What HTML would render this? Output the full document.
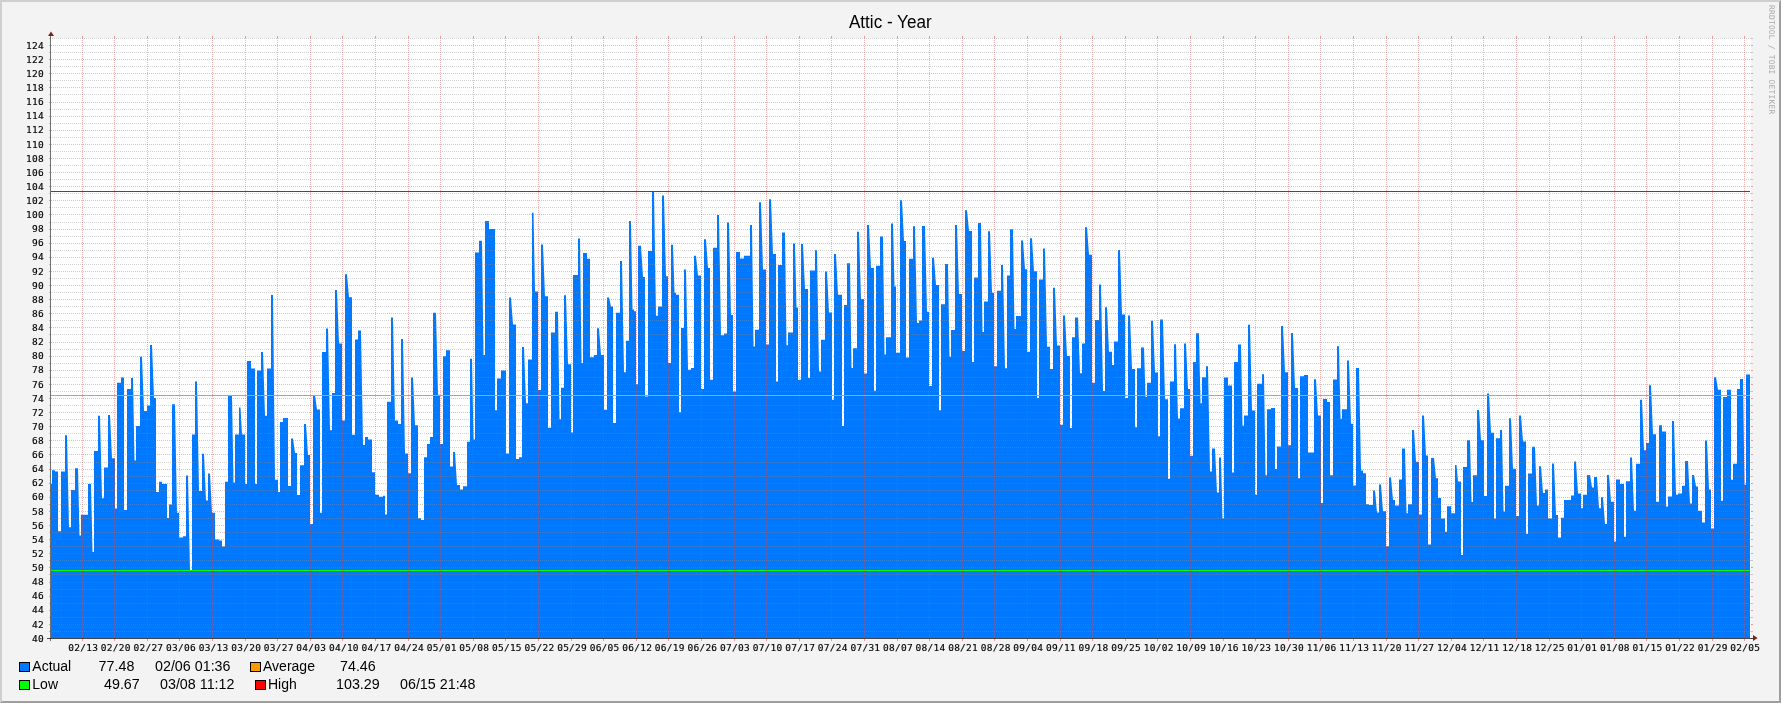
<!DOCTYPE html>
<html lang="en"><head><meta charset="utf-8"><title>Attic - Year</title>
<style>
html,body{margin:0;padding:0;background:#f3f3f3;}
body{width:1781px;height:703px;overflow:hidden;position:relative;font-family:"Liberation Sans",sans-serif;}
svg{position:absolute;left:0;top:0;display:block}
.ax{font-family:"DejaVu Sans Mono","Liberation Mono",monospace;font-size:9.5px;fill:#000;letter-spacing:0.25px;stroke:#000;stroke-width:0.15px}
.lg{font-family:"Liberation Sans",sans-serif;font-size:14.8px;fill:#000;white-space:pre}
.tt{font-family:"Liberation Sans",sans-serif;font-size:17.9px;fill:#000;white-space:pre}
.wm{font-family:"DejaVu Sans Mono","Liberation Mono",monospace;font-size:7.9px;fill:#a9a9a9;letter-spacing:0.22px}
</style></head><body>
<svg style="will-change:transform" width="1781" height="703" viewBox="0 0 1781 703">

<rect x="0" y="0" width="1781" height="703" fill="#f3f3f3"/>
<polygon points="0,0 1781,0 1779,2 2,2 2,701 0,703" fill="#cfcfcf"/>
<polygon points="1781,703 0,703 2,701 1779,701 1779,2 1781,0" fill="#9e9e9e"/>
<rect x="51" y="38" width="1700" height="600" fill="#ffffff"/>
<polygon points="51,638 51.0,483.9 52.0,483.9 52.0,470.3 55.0,470.3 55.0,471.5 58.0,471.5 58.0,531.3 61.0,531.3 61.0,471.5 65.0,471.5 65.0,435.2 67.0,435.2 69.0,527.2 71.0,527.2 71.0,490.1 75.0,490.1 75.0,468.2 78.0,468.2 79.5,535.4 81.0,535.4 81.0,514.8 88.0,514.8 88.0,483.9 91.0,483.9 92.5,551.9 94.0,551.9 94.0,450.9 98.0,450.9 98.0,415.8 100.0,415.8 102.0,498.3 104.0,498.3 104.0,467.4 108.0,467.4 108.0,415.0 110.0,415.0 112.0,458.3 115.0,458.3 115.0,508.6 117.0,508.6 117.0,382.8 121.0,382.8 121.0,377.5 124.0,377.5 124.0,509.9 127.0,509.9 127.0,389.0 131.0,389.0 131.0,377.9 133.0,377.9 134.5,460.4 136.0,460.4 136.0,426.1 140.0,426.1 140.0,356.8 142.0,356.8 144.0,410.9 147.0,410.9 147.0,405.5 150.0,405.5 150.0,344.9 152.0,344.9 154.0,398.1 156.0,398.1 156.0,492.1 159.0,492.1 159.0,481.8 162.0,481.8 162.0,483.9 167.0,483.9 167.0,518.1 169.0,518.1 169.0,504.5 172.0,504.5 172.0,404.3 175.0,404.3 177.0,512.8 179.0,512.8 179.0,537.5 183.0,537.5 183.0,536.3 186.0,536.3 186.0,475.6 188.0,475.6 190.0,570.5 192.0,570.5 192.0,434.4 195.0,434.4 195.0,381.6 197.0,381.6 199.0,490.9 202.0,490.9 202.0,453.8 204.0,453.8 206.0,500.4 208.0,500.4 208.0,473.6 210.0,473.6 212.0,512.8 215.0,512.8 215.0,539.6 219.0,539.6 219.0,540.4 222.0,540.4 222.0,546.6 225.0,546.6 225.0,481.8 228.0,481.8 228.0,396.0 232.0,396.0 233.5,482.6 235.0,482.6 235.0,434.4 239.0,434.4 239.0,407.6 240.5,407.6 242.0,434.4 245.0,434.4 245.0,483.9 247.0,483.9 247.0,361.0 251.0,361.0 251.0,368.4 255.0,368.4 255.0,483.9 257.0,483.9 257.0,370.4 261.0,370.4 261.0,351.9 263.0,351.9 265.0,415.8 267.0,415.8 267.0,368.4 271.0,368.4 271.0,295.0 273.0,295.0 275.0,479.8 278.0,479.8 278.0,492.1 280.0,492.1 280.0,422.0 283.0,422.0 283.0,417.9 288.0,417.9 288.0,485.9 291.0,485.9 291.0,438.5 293.0,438.5 295.0,452.9 297.0,452.9 297.0,495.0 300.0,495.0 300.0,465.3 304.0,465.3 304.0,424.1 306.0,424.1 308.0,455.0 310.0,455.0 310.0,523.9 313.0,523.9 313.0,395.2 315.0,395.2 317.0,409.6 320.0,409.6 320.0,512.8 322.0,512.8 322.0,351.9 326.0,351.9 326.0,328.4 328.0,328.4 330.0,430.3 332.0,430.3 332.0,393.1 335.0,393.1 335.0,290.0 337.0,290.0 339.0,343.6 342.0,343.6 342.0,420.6 345.0,420.6 345.0,274.2 347.0,274.2 349.0,297.2 352.0,297.2 352.0,434.7 355.0,434.7 355.0,339.4 358.0,339.4 358.0,330.5 361.0,330.5 363.0,445.0 365.0,445.0 365.0,437.1 368.0,437.1 368.0,439.4 372.0,439.4 372.0,472.3 375.0,472.3 375.0,494.8 379.0,494.8 379.0,496.7 383.0,496.7 383.0,495.7 385.0,495.7 385.0,514.5 387.0,514.5 387.0,401.8 391.0,401.8 391.0,317.4 393.0,317.4 395.0,420.6 398.0,420.6 398.0,423.9 401.0,423.9 401.0,338.9 403.0,338.9 405.0,453.5 408.0,453.5 408.0,473.2 411.0,473.2 411.0,377.4 413.0,377.4 415.0,425.3 418.0,425.3 418.0,518.3 421.0,518.3 421.0,520.1 424.0,520.1 424.0,457.2 427.0,457.2 427.0,444.1 430.0,444.1 430.0,437.1 433.0,437.1 433.0,312.7 436.0,312.7 438.0,394.8 440.0,394.8 440.0,444.1 443.0,444.1 443.0,356.3 446.0,356.3 446.0,350.2 450.0,350.2 450.0,466.6 453.0,466.6 453.0,452.1 455.0,452.1 457.0,484.9 460.0,484.9 460.0,489.6 463.0,489.6 463.0,486.3 467.0,486.3 467.0,441.7 470.0,441.7 470.0,358.7 472.0,358.7 473.5,439.4 475.0,439.4 475.0,252.6 479.0,252.6 479.0,240.8 482.0,240.8 483.5,354.9 485.0,354.9 485.0,221.1 489.0,221.1 489.0,229.1 495.0,229.1 495.0,410.3 497.0,410.3 497.0,378.4 501.0,378.4 501.0,370.4 506.0,370.4 506.0,453.5 509.0,453.5 509.0,297.6 511.0,297.6 513.0,324.4 516.0,324.4 516.0,459.1 519.0,459.1 519.0,457.2 522.0,457.2 522.0,346.9 524.0,346.9 526.0,403.3 528.0,403.3 528.0,359.6 532.0,359.6 532.0,212.7 533.5,212.7 535.0,291.5 538.0,291.5 538.0,390.1 541.0,390.1 541.0,244.6 543.0,244.6 545.0,296.2 548.0,296.2 548.0,427.7 551.0,427.7 551.0,332.4 555.0,332.4 555.0,311.7 558.0,311.7 559.5,419.2 561.0,419.2 561.0,387.8 564.0,387.8 564.0,295.3 566.0,295.3 568.0,364.3 571.0,364.3 571.0,432.4 573.0,432.4 573.0,275.1 578.0,275.1 578.0,238.5 580.0,238.5 581.5,362.9 583.0,362.9 583.0,253.0 587.0,253.0 587.0,258.7 590.0,258.7 590.0,357.3 594.0,357.3 594.0,354.9 597.0,354.9 597.0,328.2 599.0,328.2 601.0,354.9 604.0,354.9 604.0,409.8 607.0,409.8 607.0,297.6 609.0,297.6 611.0,306.6 613.0,306.6 613.0,423.0 616.0,423.0 616.0,312.7 620.0,312.7 620.0,261.0 622.0,261.0 624.0,372.3 626.0,372.3 626.0,340.8 629.0,340.8 629.0,221.1 631.0,221.1 632.5,309.4 634.0,309.4 634.0,311.3 636.0,311.3 636.0,384.2 638.0,384.2 638.0,245.8 641.0,245.8 643.0,276.9 645.0,276.9 645.0,396.4 648.0,396.4 648.0,251.0 652.0,251.0 652.0,191.8 654.0,191.8 656.0,315.7 658.0,315.7 658.0,306.5 662.0,306.5 662.0,195.5 664.0,195.5 666.0,276.2 668.0,276.2 668.0,363.1 671.0,363.1 671.0,244.7 673.0,244.7 674.5,292.8 676.0,292.8 676.0,294.7 679.0,294.7 679.0,412.3 681.0,412.3 681.0,327.9 684.0,327.9 684.0,269.5 686.0,269.5 688.0,369.7 691.0,369.7 691.0,367.9 694.0,367.9 694.0,255.8 696.0,255.8 698.0,275.4 701.0,275.4 701.0,389.0 704.0,389.0 704.0,239.2 706.0,239.2 708.0,268.0 710.0,268.0 710.0,379.7 713.0,379.7 713.0,247.7 717.0,247.7 717.0,215.1 719.0,215.1 721.0,335.3 724.0,335.3 724.0,333.5 727.0,333.5 727.0,222.5 729.0,222.5 731.0,315.0 733.0,315.0 733.0,391.6 736.0,391.6 736.0,252.1 740.0,252.1 740.0,258.4 744.0,258.4 744.0,255.8 750.0,255.8 750.0,225.1 752.0,225.1 753.5,346.4 755.0,346.4 755.0,329.8 759.0,329.8 759.0,202.2 761.0,202.2 763.0,269.5 766.0,269.5 766.0,344.6 769.0,344.6 769.0,199.2 771.0,199.2 773.0,254.0 776.0,254.0 776.0,381.6 778.0,381.6 778.0,265.1 782.0,265.1 782.0,232.5 785.0,232.5 786.5,345.3 788.0,345.3 788.0,332.4 793.0,332.4 793.0,243.6 795.0,243.6 796.5,307.6 798.0,307.6 798.0,379.7 801.0,379.7 801.0,244.0 803.0,244.0 805.0,289.1 808.0,289.1 808.0,377.9 810.0,377.9 810.0,270.6 815.0,270.6 815.0,250.3 817.0,250.3 819.0,371.6 821.0,371.6 821.0,339.8 825.0,339.8 825.0,271.4 827.0,271.4 829.0,312.4 832.0,312.4 832.0,399.7 834.0,399.7 834.0,254.0 836.0,254.0 838.0,294.7 842.0,294.7 842.0,425.9 844.0,425.9 844.0,305.0 847.0,305.0 847.0,263.2 850.0,263.2 851.5,367.9 853.0,367.9 853.0,348.3 857.0,348.3 857.0,231.8 859.0,231.8 861.0,299.1 864.0,299.1 864.0,373.4 867.0,373.4 867.0,225.1 869.0,225.1 871.0,268.0 874.0,268.0 874.0,390.8 876.0,390.8 876.0,265.8 880.0,265.8 880.0,236.6 883.0,236.6 884.5,354.6 886.0,354.6 886.0,337.2 891.0,337.2 891.0,223.6 893.0,223.6 894.5,286.5 896.0,286.5 896.0,352.7 900.0,352.7 900.0,200.3 902.0,200.3 904.0,241.0 906.0,241.0 906.0,357.5 909.0,357.5 909.0,258.8 913.0,258.8 913.0,226.2 915.0,226.2 917.0,323.1 919.0,323.1 919.0,320.5 922.0,320.5 922.0,225.9 925.0,225.9 927.0,311.7 929.0,311.7 929.0,386.0 932.0,386.0 932.0,257.7 934.0,257.7 936.0,284.9 939.0,284.9 939.0,410.3 941.0,410.3 941.0,304.3 945.0,304.3 945.0,263.9 948.0,263.9 949.5,356.7 951.0,356.7 951.0,329.9 955.0,329.9 955.0,225.1 957.0,225.1 959.0,294.0 962.0,294.0 962.0,350.9 965.0,350.9 965.0,210.3 967.0,210.3 969.0,230.9 972.0,230.9 972.0,362.1 974.0,362.1 974.0,277.5 978.0,277.5 978.0,223.1 981.0,223.1 982.5,332.0 984.0,332.0 984.0,301.4 988.0,301.4 988.0,231.3 990.0,231.3 992.0,292.8 994.0,292.8 994.0,366.2 997.0,366.2 997.0,290.7 1001.0,290.7 1001.0,265.1 1003.0,265.1 1005.0,368.3 1007.0,368.3 1007.0,275.4 1010.0,275.4 1010.0,229.2 1013.0,229.2 1014.5,329.1 1016.0,329.1 1016.0,315.9 1021.0,315.9 1021.0,240.4 1023.0,240.4 1025.0,269.3 1027.0,269.3 1027.0,351.8 1030.0,351.8 1030.0,238.3 1032.0,238.3 1034.0,271.3 1037.0,271.3 1037.0,398.0 1039.0,398.0 1039.0,279.6 1043.0,279.6 1043.0,248.6 1045.0,248.6 1047.0,346.8 1050.0,346.8 1050.0,369.1 1053.0,369.1 1053.0,287.8 1055.0,287.8 1057.0,345.6 1060.0,345.6 1060.0,424.8 1063.0,424.8 1063.0,315.5 1065.0,315.5 1067.0,355.9 1070.0,355.9 1070.0,428.1 1072.0,428.1 1072.0,337.3 1075.0,337.3 1075.0,317.5 1078.0,317.5 1080.0,373.2 1082.0,373.2 1082.0,343.5 1085.0,343.5 1085.0,227.2 1087.0,227.2 1089.0,254.8 1092.0,254.8 1092.0,382.7 1095.0,382.7 1095.0,320.0 1099.0,320.0 1099.0,284.5 1101.0,284.5 1103.0,390.9 1105.0,390.9 1105.0,307.2 1107.0,307.2 1109.0,351.8 1112.0,351.8 1112.0,365.0 1114.0,365.0 1114.0,341.4 1118.0,341.4 1118.0,249.9 1120.0,249.9 1122.0,314.6 1125.0,314.6 1125.0,398.0 1128.0,398.0 1128.0,315.5 1130.0,315.5 1132.0,369.1 1135.0,369.1 1135.0,427.2 1137.0,427.2 1137.0,368.3 1141.0,368.3 1141.0,347.6 1144.0,347.6 1145.5,397.1 1147.0,397.1 1147.0,382.7 1151.0,382.7 1151.0,320.8 1153.0,320.8 1155.0,372.4 1158.0,372.4 1158.0,436.3 1160.0,436.3 1160.0,319.6 1163.0,319.6 1165.0,399.2 1168.0,399.2 1168.0,478.8 1170.0,478.8 1170.0,381.5 1174.0,381.5 1174.0,344.3 1176.0,344.3 1178.0,418.6 1180.0,418.6 1180.0,408.3 1184.0,408.3 1184.0,343.5 1186.0,343.5 1188.0,388.9 1190.0,388.9 1190.0,455.7 1193.0,455.7 1193.0,362.1 1196.0,362.1 1196.0,333.2 1199.0,333.2 1200.5,403.3 1202.0,403.3 1202.0,377.3 1206.0,377.3 1206.0,366.2 1208.0,366.2 1210.0,471.4 1212.0,471.4 1212.0,448.5 1215.0,448.5 1217.0,492.6 1219.0,492.6 1219.0,457.6 1221.0,457.6 1222.5,518.6 1224.0,518.6 1224.0,377.6 1228.0,377.6 1228.0,385.4 1232.0,385.4 1232.0,472.4 1234.0,472.4 1234.0,361.9 1238.0,361.9 1238.0,344.6 1241.0,344.6 1242.5,425.8 1244.0,425.8 1244.0,415.5 1248.0,415.5 1248.0,324.8 1250.0,324.8 1252.0,410.6 1255.0,410.6 1255.0,494.7 1257.0,494.7 1257.0,383.7 1262.0,383.7 1262.0,374.3 1264.0,374.3 1265.5,475.3 1267.0,475.3 1267.0,409.3 1271.0,409.3 1271.0,408.1 1275.0,408.1 1275.0,469.1 1277.0,469.1 1277.0,446.4 1281.0,446.4 1281.0,326.0 1283.0,326.0 1285.0,372.2 1288.0,372.2 1288.0,445.2 1291.0,445.2 1291.0,333.0 1293.0,333.0 1295.0,387.9 1298.0,387.9 1298.0,478.2 1300.0,478.2 1300.0,376.3 1304.0,376.3 1304.0,375.1 1308.0,375.1 1308.0,452.6 1311.0,452.6 1311.0,452.6 1314.0,452.6 1314.0,379.2 1316.0,379.2 1318.0,415.5 1321.0,415.5 1321.0,503.0 1323.0,503.0 1323.0,399.0 1327.0,399.0 1327.0,401.9 1330.0,401.9 1330.0,475.3 1333.0,475.3 1333.0,379.6 1337.0,379.6 1337.0,346.2 1339.0,346.2 1340.5,418.8 1342.0,418.8 1342.0,409.3 1347.0,409.3 1347.0,360.6 1349.0,360.6 1351.0,423.8 1353.0,423.8 1353.0,485.6 1356.0,485.6 1356.0,368.1 1359.0,368.1 1361.0,470.4 1363.0,470.4 1363.0,473.3 1366.0,473.3 1366.0,504.2 1369.0,504.2 1369.0,505.0 1373.0,505.0 1373.0,490.6 1375.0,490.6 1377.0,512.4 1379.0,512.4 1379.0,484.4 1381.0,484.4 1383.0,511.2 1386.0,511.2 1386.0,546.3 1389.0,546.3 1389.0,477.4 1391.0,477.4 1393.0,500.1 1395.0,500.1 1395.0,505.4 1399.0,505.4 1399.0,479.4 1402.0,479.4 1402.0,448.5 1405.0,448.5 1406.5,513.3 1408.0,513.3 1408.0,504.2 1412.0,504.2 1412.0,429.9 1414.0,429.9 1416.0,461.7 1419.0,461.7 1419.0,514.5 1422.0,514.5 1422.0,415.5 1424.0,415.5 1426.0,455.5 1428.0,455.5 1428.0,544.6 1431.0,544.6 1431.0,458.0 1434.0,458.0 1436.0,478.2 1438.0,478.2 1438.0,498.0 1441.0,498.0 1441.0,518.6 1445.0,518.6 1445.0,531.8 1447.0,531.8 1447.0,506.3 1451.0,506.3 1451.0,513.3 1455.0,513.3 1455.0,465.0 1456.5,465.0 1458.0,481.5 1461.0,481.5 1461.0,554.9 1463.0,554.9 1463.0,467.1 1467.0,467.1 1467.0,440.3 1470.0,440.3 1471.5,502.1 1473.0,502.1 1473.0,475.3 1477.0,475.3 1477.0,410.1 1479.0,410.1 1481.0,440.3 1484.0,440.3 1484.0,495.9 1487.0,495.9 1487.0,393.6 1489.0,393.6 1491.0,432.8 1494.0,432.8 1494.0,518.6 1496.0,518.6 1496.0,438.2 1500.0,438.2 1500.0,429.9 1502.0,429.9 1503.5,511.4 1505.0,511.4 1505.0,485.8 1509.0,485.8 1509.0,418.2 1511.0,418.2 1513.0,468.7 1516.0,468.7 1516.0,516.0 1519.0,516.0 1519.0,415.4 1521.0,415.4 1523.0,441.4 1526.0,441.4 1526.0,533.8 1528.0,533.8 1528.0,473.4 1532.0,473.4 1532.0,446.7 1535.0,446.7 1537.0,505.4 1539.0,505.4 1539.0,466.2 1541.0,466.2 1543.0,492.9 1545.0,492.9 1545.0,489.4 1548.0,489.4 1548.0,518.5 1552.0,518.5 1552.0,463.4 1554.0,463.4 1556.0,515.0 1558.0,515.0 1558.0,537.4 1561.0,537.4 1561.0,517.8 1564.0,517.8 1564.0,500.0 1568.0,500.0 1568.0,500.0 1571.0,500.0 1571.0,495.4 1574.0,495.4 1574.0,461.6 1576.0,461.6 1578.0,493.6 1581.0,493.6 1581.0,508.2 1583.0,508.2 1583.0,494.7 1587.0,494.7 1587.0,475.1 1590.0,475.1 1592.0,487.6 1594.0,487.6 1594.0,476.9 1597.0,476.9 1599.0,508.2 1601.0,508.2 1601.0,497.2 1603.0,497.2 1605.0,523.9 1607.0,523.9 1607.0,475.1 1609.0,475.1 1611.0,501.8 1614.0,501.8 1614.0,541.6 1616.0,541.6 1616.0,479.4 1620.0,479.4 1620.0,484.0 1624.0,484.0 1624.0,536.7 1626.0,536.7 1626.0,481.2 1630.0,481.2 1630.0,457.4 1632.0,457.4 1634.0,510.7 1636.0,510.7 1636.0,463.8 1640.0,463.8 1640.0,399.7 1642.0,399.7 1644.0,450.2 1646.0,450.2 1646.0,443.1 1649.0,443.1 1649.0,385.2 1651.0,385.2 1653.0,434.2 1656.0,434.2 1656.0,501.8 1659.0,501.8 1659.0,425.3 1662.0,425.3 1662.0,431.4 1666.0,431.4 1666.0,506.4 1668.0,506.4 1668.0,496.5 1672.0,496.5 1672.0,421.1 1674.0,421.1 1676.0,494.7 1678.0,494.7 1678.0,493.6 1682.0,493.6 1682.0,485.8 1685.0,485.8 1685.0,460.9 1688.0,460.9 1690.0,503.6 1692.0,503.6 1692.0,475.1 1694.0,475.1 1696.0,486.5 1698.0,486.5 1698.0,510.7 1702.0,510.7 1702.0,522.4 1705.0,522.4 1705.0,440.6 1707.0,440.6 1709.0,489.4 1711.0,489.4 1711.0,528.5 1714.0,528.5 1714.0,377.3 1716.0,377.3 1718.0,389.8 1721.0,389.8 1721.0,500.7 1723.0,500.7 1723.0,396.9 1727.0,396.9 1727.0,389.8 1731.0,389.8 1731.0,479.8 1733.0,479.8 1733.0,463.8 1737.0,463.8 1737.0,389.1 1740.0,389.1 1740.0,379.1 1743.0,379.1 1744.5,484.7 1746.0,484.7 1746.0,374.5 1750.0,374.5 1750,638" fill="#0078ff" shape-rendering="geometricPrecision"/>
<rect x="51" y="395" width="1699" height="1" fill="#ff9900"/>
<rect x="51" y="570" width="1699" height="1" fill="#00ff00"/>
<rect x="51" y="191" width="1699" height="1" fill="#ff0000"/>
<line x1="51" y1="638.5" x2="1751" y2="638.5" stroke="#de5050" stroke-opacity="0.41" stroke-width="1" stroke-dasharray="1 1"/>
<line x1="49" y1="638.5" x2="50" y2="638.5" stroke="#de5050" stroke-opacity="0.55" stroke-width="1"/>
<line x1="1751" y1="638.5" x2="1753" y2="638.5" stroke="#de5050" stroke-opacity="0.55" stroke-width="1"/>
<line x1="50" y1="631.5" x2="1751" y2="631.5" stroke="#8f8f8f" stroke-opacity="0.39" stroke-width="1" stroke-dasharray="1 1"/>
<line x1="49" y1="631.5" x2="50" y2="631.5" stroke="#8f8f8f" stroke-opacity="0.45" stroke-width="1"/>
<line x1="1751" y1="631.5" x2="1753" y2="631.5" stroke="#8f8f8f" stroke-opacity="0.45" stroke-width="1"/>
<line x1="51" y1="624.5" x2="1751" y2="624.5" stroke="#de5050" stroke-opacity="0.41" stroke-width="1" stroke-dasharray="1 1"/>
<line x1="49" y1="624.5" x2="50" y2="624.5" stroke="#de5050" stroke-opacity="0.55" stroke-width="1"/>
<line x1="1751" y1="624.5" x2="1753" y2="624.5" stroke="#de5050" stroke-opacity="0.55" stroke-width="1"/>
<line x1="50" y1="617.5" x2="1751" y2="617.5" stroke="#8f8f8f" stroke-opacity="0.39" stroke-width="1" stroke-dasharray="1 1"/>
<line x1="49" y1="617.5" x2="50" y2="617.5" stroke="#8f8f8f" stroke-opacity="0.45" stroke-width="1"/>
<line x1="1751" y1="617.5" x2="1753" y2="617.5" stroke="#8f8f8f" stroke-opacity="0.45" stroke-width="1"/>
<line x1="51" y1="610.5" x2="1751" y2="610.5" stroke="#de5050" stroke-opacity="0.41" stroke-width="1" stroke-dasharray="1 1"/>
<line x1="49" y1="610.5" x2="50" y2="610.5" stroke="#de5050" stroke-opacity="0.55" stroke-width="1"/>
<line x1="1751" y1="610.5" x2="1753" y2="610.5" stroke="#de5050" stroke-opacity="0.55" stroke-width="1"/>
<line x1="50" y1="603.5" x2="1751" y2="603.5" stroke="#8f8f8f" stroke-opacity="0.39" stroke-width="1" stroke-dasharray="1 1"/>
<line x1="49" y1="603.5" x2="50" y2="603.5" stroke="#8f8f8f" stroke-opacity="0.45" stroke-width="1"/>
<line x1="1751" y1="603.5" x2="1753" y2="603.5" stroke="#8f8f8f" stroke-opacity="0.45" stroke-width="1"/>
<line x1="51" y1="596.5" x2="1751" y2="596.5" stroke="#de5050" stroke-opacity="0.41" stroke-width="1" stroke-dasharray="1 1"/>
<line x1="49" y1="596.5" x2="50" y2="596.5" stroke="#de5050" stroke-opacity="0.55" stroke-width="1"/>
<line x1="1751" y1="596.5" x2="1753" y2="596.5" stroke="#de5050" stroke-opacity="0.55" stroke-width="1"/>
<line x1="50" y1="589.5" x2="1751" y2="589.5" stroke="#8f8f8f" stroke-opacity="0.39" stroke-width="1" stroke-dasharray="1 1"/>
<line x1="49" y1="589.5" x2="50" y2="589.5" stroke="#8f8f8f" stroke-opacity="0.45" stroke-width="1"/>
<line x1="1751" y1="589.5" x2="1753" y2="589.5" stroke="#8f8f8f" stroke-opacity="0.45" stroke-width="1"/>
<line x1="51" y1="582.5" x2="1751" y2="582.5" stroke="#de5050" stroke-opacity="0.41" stroke-width="1" stroke-dasharray="1 1"/>
<line x1="49" y1="582.5" x2="50" y2="582.5" stroke="#de5050" stroke-opacity="0.55" stroke-width="1"/>
<line x1="1751" y1="582.5" x2="1753" y2="582.5" stroke="#de5050" stroke-opacity="0.55" stroke-width="1"/>
<line x1="50" y1="574.5" x2="1751" y2="574.5" stroke="#8f8f8f" stroke-opacity="0.39" stroke-width="1" stroke-dasharray="1 1"/>
<line x1="49" y1="574.5" x2="50" y2="574.5" stroke="#8f8f8f" stroke-opacity="0.45" stroke-width="1"/>
<line x1="1751" y1="574.5" x2="1753" y2="574.5" stroke="#8f8f8f" stroke-opacity="0.45" stroke-width="1"/>
<line x1="51" y1="567.5" x2="1751" y2="567.5" stroke="#de5050" stroke-opacity="0.41" stroke-width="1" stroke-dasharray="1 1"/>
<line x1="49" y1="567.5" x2="50" y2="567.5" stroke="#de5050" stroke-opacity="0.55" stroke-width="1"/>
<line x1="1751" y1="567.5" x2="1753" y2="567.5" stroke="#de5050" stroke-opacity="0.55" stroke-width="1"/>
<line x1="50" y1="560.5" x2="1751" y2="560.5" stroke="#8f8f8f" stroke-opacity="0.39" stroke-width="1" stroke-dasharray="1 1"/>
<line x1="49" y1="560.5" x2="50" y2="560.5" stroke="#8f8f8f" stroke-opacity="0.45" stroke-width="1"/>
<line x1="1751" y1="560.5" x2="1753" y2="560.5" stroke="#8f8f8f" stroke-opacity="0.45" stroke-width="1"/>
<line x1="51" y1="553.5" x2="1751" y2="553.5" stroke="#de5050" stroke-opacity="0.41" stroke-width="1" stroke-dasharray="1 1"/>
<line x1="49" y1="553.5" x2="50" y2="553.5" stroke="#de5050" stroke-opacity="0.55" stroke-width="1"/>
<line x1="1751" y1="553.5" x2="1753" y2="553.5" stroke="#de5050" stroke-opacity="0.55" stroke-width="1"/>
<line x1="50" y1="546.5" x2="1751" y2="546.5" stroke="#8f8f8f" stroke-opacity="0.39" stroke-width="1" stroke-dasharray="1 1"/>
<line x1="49" y1="546.5" x2="50" y2="546.5" stroke="#8f8f8f" stroke-opacity="0.45" stroke-width="1"/>
<line x1="1751" y1="546.5" x2="1753" y2="546.5" stroke="#8f8f8f" stroke-opacity="0.45" stroke-width="1"/>
<line x1="51" y1="539.5" x2="1751" y2="539.5" stroke="#de5050" stroke-opacity="0.41" stroke-width="1" stroke-dasharray="1 1"/>
<line x1="49" y1="539.5" x2="50" y2="539.5" stroke="#de5050" stroke-opacity="0.55" stroke-width="1"/>
<line x1="1751" y1="539.5" x2="1753" y2="539.5" stroke="#de5050" stroke-opacity="0.55" stroke-width="1"/>
<line x1="50" y1="532.5" x2="1751" y2="532.5" stroke="#8f8f8f" stroke-opacity="0.39" stroke-width="1" stroke-dasharray="1 1"/>
<line x1="49" y1="532.5" x2="50" y2="532.5" stroke="#8f8f8f" stroke-opacity="0.45" stroke-width="1"/>
<line x1="1751" y1="532.5" x2="1753" y2="532.5" stroke="#8f8f8f" stroke-opacity="0.45" stroke-width="1"/>
<line x1="51" y1="525.5" x2="1751" y2="525.5" stroke="#de5050" stroke-opacity="0.41" stroke-width="1" stroke-dasharray="1 1"/>
<line x1="49" y1="525.5" x2="50" y2="525.5" stroke="#de5050" stroke-opacity="0.55" stroke-width="1"/>
<line x1="1751" y1="525.5" x2="1753" y2="525.5" stroke="#de5050" stroke-opacity="0.55" stroke-width="1"/>
<line x1="50" y1="518.5" x2="1751" y2="518.5" stroke="#8f8f8f" stroke-opacity="0.39" stroke-width="1" stroke-dasharray="1 1"/>
<line x1="49" y1="518.5" x2="50" y2="518.5" stroke="#8f8f8f" stroke-opacity="0.45" stroke-width="1"/>
<line x1="1751" y1="518.5" x2="1753" y2="518.5" stroke="#8f8f8f" stroke-opacity="0.45" stroke-width="1"/>
<line x1="51" y1="511.5" x2="1751" y2="511.5" stroke="#de5050" stroke-opacity="0.41" stroke-width="1" stroke-dasharray="1 1"/>
<line x1="49" y1="511.5" x2="50" y2="511.5" stroke="#de5050" stroke-opacity="0.55" stroke-width="1"/>
<line x1="1751" y1="511.5" x2="1753" y2="511.5" stroke="#de5050" stroke-opacity="0.55" stroke-width="1"/>
<line x1="50" y1="504.5" x2="1751" y2="504.5" stroke="#8f8f8f" stroke-opacity="0.39" stroke-width="1" stroke-dasharray="1 1"/>
<line x1="49" y1="504.5" x2="50" y2="504.5" stroke="#8f8f8f" stroke-opacity="0.45" stroke-width="1"/>
<line x1="1751" y1="504.5" x2="1753" y2="504.5" stroke="#8f8f8f" stroke-opacity="0.45" stroke-width="1"/>
<line x1="51" y1="497.5" x2="1751" y2="497.5" stroke="#de5050" stroke-opacity="0.41" stroke-width="1" stroke-dasharray="1 1"/>
<line x1="49" y1="497.5" x2="50" y2="497.5" stroke="#de5050" stroke-opacity="0.55" stroke-width="1"/>
<line x1="1751" y1="497.5" x2="1753" y2="497.5" stroke="#de5050" stroke-opacity="0.55" stroke-width="1"/>
<line x1="50" y1="490.5" x2="1751" y2="490.5" stroke="#8f8f8f" stroke-opacity="0.39" stroke-width="1" stroke-dasharray="1 1"/>
<line x1="49" y1="490.5" x2="50" y2="490.5" stroke="#8f8f8f" stroke-opacity="0.45" stroke-width="1"/>
<line x1="1751" y1="490.5" x2="1753" y2="490.5" stroke="#8f8f8f" stroke-opacity="0.45" stroke-width="1"/>
<line x1="51" y1="483.5" x2="1751" y2="483.5" stroke="#de5050" stroke-opacity="0.41" stroke-width="1" stroke-dasharray="1 1"/>
<line x1="49" y1="483.5" x2="50" y2="483.5" stroke="#de5050" stroke-opacity="0.55" stroke-width="1"/>
<line x1="1751" y1="483.5" x2="1753" y2="483.5" stroke="#de5050" stroke-opacity="0.55" stroke-width="1"/>
<line x1="50" y1="476.5" x2="1751" y2="476.5" stroke="#8f8f8f" stroke-opacity="0.39" stroke-width="1" stroke-dasharray="1 1"/>
<line x1="49" y1="476.5" x2="50" y2="476.5" stroke="#8f8f8f" stroke-opacity="0.45" stroke-width="1"/>
<line x1="1751" y1="476.5" x2="1753" y2="476.5" stroke="#8f8f8f" stroke-opacity="0.45" stroke-width="1"/>
<line x1="51" y1="469.5" x2="1751" y2="469.5" stroke="#de5050" stroke-opacity="0.41" stroke-width="1" stroke-dasharray="1 1"/>
<line x1="49" y1="469.5" x2="50" y2="469.5" stroke="#de5050" stroke-opacity="0.55" stroke-width="1"/>
<line x1="1751" y1="469.5" x2="1753" y2="469.5" stroke="#de5050" stroke-opacity="0.55" stroke-width="1"/>
<line x1="50" y1="462.5" x2="1751" y2="462.5" stroke="#8f8f8f" stroke-opacity="0.39" stroke-width="1" stroke-dasharray="1 1"/>
<line x1="49" y1="462.5" x2="50" y2="462.5" stroke="#8f8f8f" stroke-opacity="0.45" stroke-width="1"/>
<line x1="1751" y1="462.5" x2="1753" y2="462.5" stroke="#8f8f8f" stroke-opacity="0.45" stroke-width="1"/>
<line x1="51" y1="454.5" x2="1751" y2="454.5" stroke="#de5050" stroke-opacity="0.41" stroke-width="1" stroke-dasharray="1 1"/>
<line x1="49" y1="454.5" x2="50" y2="454.5" stroke="#de5050" stroke-opacity="0.55" stroke-width="1"/>
<line x1="1751" y1="454.5" x2="1753" y2="454.5" stroke="#de5050" stroke-opacity="0.55" stroke-width="1"/>
<line x1="50" y1="447.5" x2="1751" y2="447.5" stroke="#8f8f8f" stroke-opacity="0.39" stroke-width="1" stroke-dasharray="1 1"/>
<line x1="49" y1="447.5" x2="50" y2="447.5" stroke="#8f8f8f" stroke-opacity="0.45" stroke-width="1"/>
<line x1="1751" y1="447.5" x2="1753" y2="447.5" stroke="#8f8f8f" stroke-opacity="0.45" stroke-width="1"/>
<line x1="51" y1="440.5" x2="1751" y2="440.5" stroke="#de5050" stroke-opacity="0.41" stroke-width="1" stroke-dasharray="1 1"/>
<line x1="49" y1="440.5" x2="50" y2="440.5" stroke="#de5050" stroke-opacity="0.55" stroke-width="1"/>
<line x1="1751" y1="440.5" x2="1753" y2="440.5" stroke="#de5050" stroke-opacity="0.55" stroke-width="1"/>
<line x1="50" y1="433.5" x2="1751" y2="433.5" stroke="#8f8f8f" stroke-opacity="0.39" stroke-width="1" stroke-dasharray="1 1"/>
<line x1="49" y1="433.5" x2="50" y2="433.5" stroke="#8f8f8f" stroke-opacity="0.45" stroke-width="1"/>
<line x1="1751" y1="433.5" x2="1753" y2="433.5" stroke="#8f8f8f" stroke-opacity="0.45" stroke-width="1"/>
<line x1="51" y1="426.5" x2="1751" y2="426.5" stroke="#de5050" stroke-opacity="0.41" stroke-width="1" stroke-dasharray="1 1"/>
<line x1="49" y1="426.5" x2="50" y2="426.5" stroke="#de5050" stroke-opacity="0.55" stroke-width="1"/>
<line x1="1751" y1="426.5" x2="1753" y2="426.5" stroke="#de5050" stroke-opacity="0.55" stroke-width="1"/>
<line x1="50" y1="419.5" x2="1751" y2="419.5" stroke="#8f8f8f" stroke-opacity="0.39" stroke-width="1" stroke-dasharray="1 1"/>
<line x1="49" y1="419.5" x2="50" y2="419.5" stroke="#8f8f8f" stroke-opacity="0.45" stroke-width="1"/>
<line x1="1751" y1="419.5" x2="1753" y2="419.5" stroke="#8f8f8f" stroke-opacity="0.45" stroke-width="1"/>
<line x1="51" y1="412.5" x2="1751" y2="412.5" stroke="#de5050" stroke-opacity="0.41" stroke-width="1" stroke-dasharray="1 1"/>
<line x1="49" y1="412.5" x2="50" y2="412.5" stroke="#de5050" stroke-opacity="0.55" stroke-width="1"/>
<line x1="1751" y1="412.5" x2="1753" y2="412.5" stroke="#de5050" stroke-opacity="0.55" stroke-width="1"/>
<line x1="50" y1="405.5" x2="1751" y2="405.5" stroke="#8f8f8f" stroke-opacity="0.39" stroke-width="1" stroke-dasharray="1 1"/>
<line x1="49" y1="405.5" x2="50" y2="405.5" stroke="#8f8f8f" stroke-opacity="0.45" stroke-width="1"/>
<line x1="1751" y1="405.5" x2="1753" y2="405.5" stroke="#8f8f8f" stroke-opacity="0.45" stroke-width="1"/>
<line x1="51" y1="398.5" x2="1751" y2="398.5" stroke="#de5050" stroke-opacity="0.41" stroke-width="1" stroke-dasharray="1 1"/>
<line x1="49" y1="398.5" x2="50" y2="398.5" stroke="#de5050" stroke-opacity="0.55" stroke-width="1"/>
<line x1="1751" y1="398.5" x2="1753" y2="398.5" stroke="#de5050" stroke-opacity="0.55" stroke-width="1"/>
<line x1="50" y1="391.5" x2="1751" y2="391.5" stroke="#8f8f8f" stroke-opacity="0.39" stroke-width="1" stroke-dasharray="1 1"/>
<line x1="49" y1="391.5" x2="50" y2="391.5" stroke="#8f8f8f" stroke-opacity="0.45" stroke-width="1"/>
<line x1="1751" y1="391.5" x2="1753" y2="391.5" stroke="#8f8f8f" stroke-opacity="0.45" stroke-width="1"/>
<line x1="51" y1="384.5" x2="1751" y2="384.5" stroke="#de5050" stroke-opacity="0.41" stroke-width="1" stroke-dasharray="1 1"/>
<line x1="49" y1="384.5" x2="50" y2="384.5" stroke="#de5050" stroke-opacity="0.55" stroke-width="1"/>
<line x1="1751" y1="384.5" x2="1753" y2="384.5" stroke="#de5050" stroke-opacity="0.55" stroke-width="1"/>
<line x1="50" y1="377.5" x2="1751" y2="377.5" stroke="#8f8f8f" stroke-opacity="0.39" stroke-width="1" stroke-dasharray="1 1"/>
<line x1="49" y1="377.5" x2="50" y2="377.5" stroke="#8f8f8f" stroke-opacity="0.45" stroke-width="1"/>
<line x1="1751" y1="377.5" x2="1753" y2="377.5" stroke="#8f8f8f" stroke-opacity="0.45" stroke-width="1"/>
<line x1="51" y1="370.5" x2="1751" y2="370.5" stroke="#de5050" stroke-opacity="0.41" stroke-width="1" stroke-dasharray="1 1"/>
<line x1="49" y1="370.5" x2="50" y2="370.5" stroke="#de5050" stroke-opacity="0.55" stroke-width="1"/>
<line x1="1751" y1="370.5" x2="1753" y2="370.5" stroke="#de5050" stroke-opacity="0.55" stroke-width="1"/>
<line x1="50" y1="363.5" x2="1751" y2="363.5" stroke="#8f8f8f" stroke-opacity="0.39" stroke-width="1" stroke-dasharray="1 1"/>
<line x1="49" y1="363.5" x2="50" y2="363.5" stroke="#8f8f8f" stroke-opacity="0.45" stroke-width="1"/>
<line x1="1751" y1="363.5" x2="1753" y2="363.5" stroke="#8f8f8f" stroke-opacity="0.45" stroke-width="1"/>
<line x1="51" y1="356.5" x2="1751" y2="356.5" stroke="#de5050" stroke-opacity="0.41" stroke-width="1" stroke-dasharray="1 1"/>
<line x1="49" y1="356.5" x2="50" y2="356.5" stroke="#de5050" stroke-opacity="0.55" stroke-width="1"/>
<line x1="1751" y1="356.5" x2="1753" y2="356.5" stroke="#de5050" stroke-opacity="0.55" stroke-width="1"/>
<line x1="50" y1="349.5" x2="1751" y2="349.5" stroke="#8f8f8f" stroke-opacity="0.39" stroke-width="1" stroke-dasharray="1 1"/>
<line x1="49" y1="349.5" x2="50" y2="349.5" stroke="#8f8f8f" stroke-opacity="0.45" stroke-width="1"/>
<line x1="1751" y1="349.5" x2="1753" y2="349.5" stroke="#8f8f8f" stroke-opacity="0.45" stroke-width="1"/>
<line x1="51" y1="342.5" x2="1751" y2="342.5" stroke="#de5050" stroke-opacity="0.41" stroke-width="1" stroke-dasharray="1 1"/>
<line x1="49" y1="342.5" x2="50" y2="342.5" stroke="#de5050" stroke-opacity="0.55" stroke-width="1"/>
<line x1="1751" y1="342.5" x2="1753" y2="342.5" stroke="#de5050" stroke-opacity="0.55" stroke-width="1"/>
<line x1="50" y1="334.5" x2="1751" y2="334.5" stroke="#8f8f8f" stroke-opacity="0.39" stroke-width="1" stroke-dasharray="1 1"/>
<line x1="49" y1="334.5" x2="50" y2="334.5" stroke="#8f8f8f" stroke-opacity="0.45" stroke-width="1"/>
<line x1="1751" y1="334.5" x2="1753" y2="334.5" stroke="#8f8f8f" stroke-opacity="0.45" stroke-width="1"/>
<line x1="51" y1="327.5" x2="1751" y2="327.5" stroke="#de5050" stroke-opacity="0.41" stroke-width="1" stroke-dasharray="1 1"/>
<line x1="49" y1="327.5" x2="50" y2="327.5" stroke="#de5050" stroke-opacity="0.55" stroke-width="1"/>
<line x1="1751" y1="327.5" x2="1753" y2="327.5" stroke="#de5050" stroke-opacity="0.55" stroke-width="1"/>
<line x1="50" y1="320.5" x2="1751" y2="320.5" stroke="#8f8f8f" stroke-opacity="0.39" stroke-width="1" stroke-dasharray="1 1"/>
<line x1="49" y1="320.5" x2="50" y2="320.5" stroke="#8f8f8f" stroke-opacity="0.45" stroke-width="1"/>
<line x1="1751" y1="320.5" x2="1753" y2="320.5" stroke="#8f8f8f" stroke-opacity="0.45" stroke-width="1"/>
<line x1="51" y1="313.5" x2="1751" y2="313.5" stroke="#de5050" stroke-opacity="0.41" stroke-width="1" stroke-dasharray="1 1"/>
<line x1="49" y1="313.5" x2="50" y2="313.5" stroke="#de5050" stroke-opacity="0.55" stroke-width="1"/>
<line x1="1751" y1="313.5" x2="1753" y2="313.5" stroke="#de5050" stroke-opacity="0.55" stroke-width="1"/>
<line x1="50" y1="306.5" x2="1751" y2="306.5" stroke="#8f8f8f" stroke-opacity="0.39" stroke-width="1" stroke-dasharray="1 1"/>
<line x1="49" y1="306.5" x2="50" y2="306.5" stroke="#8f8f8f" stroke-opacity="0.45" stroke-width="1"/>
<line x1="1751" y1="306.5" x2="1753" y2="306.5" stroke="#8f8f8f" stroke-opacity="0.45" stroke-width="1"/>
<line x1="51" y1="299.5" x2="1751" y2="299.5" stroke="#de5050" stroke-opacity="0.41" stroke-width="1" stroke-dasharray="1 1"/>
<line x1="49" y1="299.5" x2="50" y2="299.5" stroke="#de5050" stroke-opacity="0.55" stroke-width="1"/>
<line x1="1751" y1="299.5" x2="1753" y2="299.5" stroke="#de5050" stroke-opacity="0.55" stroke-width="1"/>
<line x1="50" y1="292.5" x2="1751" y2="292.5" stroke="#8f8f8f" stroke-opacity="0.39" stroke-width="1" stroke-dasharray="1 1"/>
<line x1="49" y1="292.5" x2="50" y2="292.5" stroke="#8f8f8f" stroke-opacity="0.45" stroke-width="1"/>
<line x1="1751" y1="292.5" x2="1753" y2="292.5" stroke="#8f8f8f" stroke-opacity="0.45" stroke-width="1"/>
<line x1="51" y1="285.5" x2="1751" y2="285.5" stroke="#de5050" stroke-opacity="0.41" stroke-width="1" stroke-dasharray="1 1"/>
<line x1="49" y1="285.5" x2="50" y2="285.5" stroke="#de5050" stroke-opacity="0.55" stroke-width="1"/>
<line x1="1751" y1="285.5" x2="1753" y2="285.5" stroke="#de5050" stroke-opacity="0.55" stroke-width="1"/>
<line x1="50" y1="278.5" x2="1751" y2="278.5" stroke="#8f8f8f" stroke-opacity="0.39" stroke-width="1" stroke-dasharray="1 1"/>
<line x1="49" y1="278.5" x2="50" y2="278.5" stroke="#8f8f8f" stroke-opacity="0.45" stroke-width="1"/>
<line x1="1751" y1="278.5" x2="1753" y2="278.5" stroke="#8f8f8f" stroke-opacity="0.45" stroke-width="1"/>
<line x1="51" y1="271.5" x2="1751" y2="271.5" stroke="#de5050" stroke-opacity="0.41" stroke-width="1" stroke-dasharray="1 1"/>
<line x1="49" y1="271.5" x2="50" y2="271.5" stroke="#de5050" stroke-opacity="0.55" stroke-width="1"/>
<line x1="1751" y1="271.5" x2="1753" y2="271.5" stroke="#de5050" stroke-opacity="0.55" stroke-width="1"/>
<line x1="50" y1="264.5" x2="1751" y2="264.5" stroke="#8f8f8f" stroke-opacity="0.39" stroke-width="1" stroke-dasharray="1 1"/>
<line x1="49" y1="264.5" x2="50" y2="264.5" stroke="#8f8f8f" stroke-opacity="0.45" stroke-width="1"/>
<line x1="1751" y1="264.5" x2="1753" y2="264.5" stroke="#8f8f8f" stroke-opacity="0.45" stroke-width="1"/>
<line x1="51" y1="257.5" x2="1751" y2="257.5" stroke="#de5050" stroke-opacity="0.41" stroke-width="1" stroke-dasharray="1 1"/>
<line x1="49" y1="257.5" x2="50" y2="257.5" stroke="#de5050" stroke-opacity="0.55" stroke-width="1"/>
<line x1="1751" y1="257.5" x2="1753" y2="257.5" stroke="#de5050" stroke-opacity="0.55" stroke-width="1"/>
<line x1="50" y1="250.5" x2="1751" y2="250.5" stroke="#8f8f8f" stroke-opacity="0.39" stroke-width="1" stroke-dasharray="1 1"/>
<line x1="49" y1="250.5" x2="50" y2="250.5" stroke="#8f8f8f" stroke-opacity="0.45" stroke-width="1"/>
<line x1="1751" y1="250.5" x2="1753" y2="250.5" stroke="#8f8f8f" stroke-opacity="0.45" stroke-width="1"/>
<line x1="51" y1="243.5" x2="1751" y2="243.5" stroke="#de5050" stroke-opacity="0.41" stroke-width="1" stroke-dasharray="1 1"/>
<line x1="49" y1="243.5" x2="50" y2="243.5" stroke="#de5050" stroke-opacity="0.55" stroke-width="1"/>
<line x1="1751" y1="243.5" x2="1753" y2="243.5" stroke="#de5050" stroke-opacity="0.55" stroke-width="1"/>
<line x1="50" y1="236.5" x2="1751" y2="236.5" stroke="#8f8f8f" stroke-opacity="0.39" stroke-width="1" stroke-dasharray="1 1"/>
<line x1="49" y1="236.5" x2="50" y2="236.5" stroke="#8f8f8f" stroke-opacity="0.45" stroke-width="1"/>
<line x1="1751" y1="236.5" x2="1753" y2="236.5" stroke="#8f8f8f" stroke-opacity="0.45" stroke-width="1"/>
<line x1="51" y1="229.5" x2="1751" y2="229.5" stroke="#de5050" stroke-opacity="0.41" stroke-width="1" stroke-dasharray="1 1"/>
<line x1="49" y1="229.5" x2="50" y2="229.5" stroke="#de5050" stroke-opacity="0.55" stroke-width="1"/>
<line x1="1751" y1="229.5" x2="1753" y2="229.5" stroke="#de5050" stroke-opacity="0.55" stroke-width="1"/>
<line x1="50" y1="222.5" x2="1751" y2="222.5" stroke="#8f8f8f" stroke-opacity="0.39" stroke-width="1" stroke-dasharray="1 1"/>
<line x1="49" y1="222.5" x2="50" y2="222.5" stroke="#8f8f8f" stroke-opacity="0.45" stroke-width="1"/>
<line x1="1751" y1="222.5" x2="1753" y2="222.5" stroke="#8f8f8f" stroke-opacity="0.45" stroke-width="1"/>
<line x1="51" y1="214.5" x2="1751" y2="214.5" stroke="#de5050" stroke-opacity="0.41" stroke-width="1" stroke-dasharray="1 1"/>
<line x1="49" y1="214.5" x2="50" y2="214.5" stroke="#de5050" stroke-opacity="0.55" stroke-width="1"/>
<line x1="1751" y1="214.5" x2="1753" y2="214.5" stroke="#de5050" stroke-opacity="0.55" stroke-width="1"/>
<line x1="50" y1="207.5" x2="1751" y2="207.5" stroke="#8f8f8f" stroke-opacity="0.39" stroke-width="1" stroke-dasharray="1 1"/>
<line x1="49" y1="207.5" x2="50" y2="207.5" stroke="#8f8f8f" stroke-opacity="0.45" stroke-width="1"/>
<line x1="1751" y1="207.5" x2="1753" y2="207.5" stroke="#8f8f8f" stroke-opacity="0.45" stroke-width="1"/>
<line x1="51" y1="200.5" x2="1751" y2="200.5" stroke="#de5050" stroke-opacity="0.41" stroke-width="1" stroke-dasharray="1 1"/>
<line x1="49" y1="200.5" x2="50" y2="200.5" stroke="#de5050" stroke-opacity="0.55" stroke-width="1"/>
<line x1="1751" y1="200.5" x2="1753" y2="200.5" stroke="#de5050" stroke-opacity="0.55" stroke-width="1"/>
<line x1="50" y1="193.5" x2="1751" y2="193.5" stroke="#8f8f8f" stroke-opacity="0.39" stroke-width="1" stroke-dasharray="1 1"/>
<line x1="49" y1="193.5" x2="50" y2="193.5" stroke="#8f8f8f" stroke-opacity="0.45" stroke-width="1"/>
<line x1="1751" y1="193.5" x2="1753" y2="193.5" stroke="#8f8f8f" stroke-opacity="0.45" stroke-width="1"/>
<line x1="51" y1="186.5" x2="1751" y2="186.5" stroke="#de5050" stroke-opacity="0.41" stroke-width="1" stroke-dasharray="1 1"/>
<line x1="49" y1="186.5" x2="50" y2="186.5" stroke="#de5050" stroke-opacity="0.55" stroke-width="1"/>
<line x1="1751" y1="186.5" x2="1753" y2="186.5" stroke="#de5050" stroke-opacity="0.55" stroke-width="1"/>
<line x1="50" y1="179.5" x2="1751" y2="179.5" stroke="#8f8f8f" stroke-opacity="0.39" stroke-width="1" stroke-dasharray="1 1"/>
<line x1="49" y1="179.5" x2="50" y2="179.5" stroke="#8f8f8f" stroke-opacity="0.45" stroke-width="1"/>
<line x1="1751" y1="179.5" x2="1753" y2="179.5" stroke="#8f8f8f" stroke-opacity="0.45" stroke-width="1"/>
<line x1="51" y1="172.5" x2="1751" y2="172.5" stroke="#de5050" stroke-opacity="0.41" stroke-width="1" stroke-dasharray="1 1"/>
<line x1="49" y1="172.5" x2="50" y2="172.5" stroke="#de5050" stroke-opacity="0.55" stroke-width="1"/>
<line x1="1751" y1="172.5" x2="1753" y2="172.5" stroke="#de5050" stroke-opacity="0.55" stroke-width="1"/>
<line x1="50" y1="165.5" x2="1751" y2="165.5" stroke="#8f8f8f" stroke-opacity="0.39" stroke-width="1" stroke-dasharray="1 1"/>
<line x1="49" y1="165.5" x2="50" y2="165.5" stroke="#8f8f8f" stroke-opacity="0.45" stroke-width="1"/>
<line x1="1751" y1="165.5" x2="1753" y2="165.5" stroke="#8f8f8f" stroke-opacity="0.45" stroke-width="1"/>
<line x1="51" y1="158.5" x2="1751" y2="158.5" stroke="#de5050" stroke-opacity="0.41" stroke-width="1" stroke-dasharray="1 1"/>
<line x1="49" y1="158.5" x2="50" y2="158.5" stroke="#de5050" stroke-opacity="0.55" stroke-width="1"/>
<line x1="1751" y1="158.5" x2="1753" y2="158.5" stroke="#de5050" stroke-opacity="0.55" stroke-width="1"/>
<line x1="50" y1="151.5" x2="1751" y2="151.5" stroke="#8f8f8f" stroke-opacity="0.39" stroke-width="1" stroke-dasharray="1 1"/>
<line x1="49" y1="151.5" x2="50" y2="151.5" stroke="#8f8f8f" stroke-opacity="0.45" stroke-width="1"/>
<line x1="1751" y1="151.5" x2="1753" y2="151.5" stroke="#8f8f8f" stroke-opacity="0.45" stroke-width="1"/>
<line x1="51" y1="144.5" x2="1751" y2="144.5" stroke="#de5050" stroke-opacity="0.41" stroke-width="1" stroke-dasharray="1 1"/>
<line x1="49" y1="144.5" x2="50" y2="144.5" stroke="#de5050" stroke-opacity="0.55" stroke-width="1"/>
<line x1="1751" y1="144.5" x2="1753" y2="144.5" stroke="#de5050" stroke-opacity="0.55" stroke-width="1"/>
<line x1="50" y1="137.5" x2="1751" y2="137.5" stroke="#8f8f8f" stroke-opacity="0.39" stroke-width="1" stroke-dasharray="1 1"/>
<line x1="49" y1="137.5" x2="50" y2="137.5" stroke="#8f8f8f" stroke-opacity="0.45" stroke-width="1"/>
<line x1="1751" y1="137.5" x2="1753" y2="137.5" stroke="#8f8f8f" stroke-opacity="0.45" stroke-width="1"/>
<line x1="51" y1="130.5" x2="1751" y2="130.5" stroke="#de5050" stroke-opacity="0.41" stroke-width="1" stroke-dasharray="1 1"/>
<line x1="49" y1="130.5" x2="50" y2="130.5" stroke="#de5050" stroke-opacity="0.55" stroke-width="1"/>
<line x1="1751" y1="130.5" x2="1753" y2="130.5" stroke="#de5050" stroke-opacity="0.55" stroke-width="1"/>
<line x1="50" y1="123.5" x2="1751" y2="123.5" stroke="#8f8f8f" stroke-opacity="0.39" stroke-width="1" stroke-dasharray="1 1"/>
<line x1="49" y1="123.5" x2="50" y2="123.5" stroke="#8f8f8f" stroke-opacity="0.45" stroke-width="1"/>
<line x1="1751" y1="123.5" x2="1753" y2="123.5" stroke="#8f8f8f" stroke-opacity="0.45" stroke-width="1"/>
<line x1="51" y1="116.5" x2="1751" y2="116.5" stroke="#de5050" stroke-opacity="0.41" stroke-width="1" stroke-dasharray="1 1"/>
<line x1="49" y1="116.5" x2="50" y2="116.5" stroke="#de5050" stroke-opacity="0.55" stroke-width="1"/>
<line x1="1751" y1="116.5" x2="1753" y2="116.5" stroke="#de5050" stroke-opacity="0.55" stroke-width="1"/>
<line x1="50" y1="109.5" x2="1751" y2="109.5" stroke="#8f8f8f" stroke-opacity="0.39" stroke-width="1" stroke-dasharray="1 1"/>
<line x1="49" y1="109.5" x2="50" y2="109.5" stroke="#8f8f8f" stroke-opacity="0.45" stroke-width="1"/>
<line x1="1751" y1="109.5" x2="1753" y2="109.5" stroke="#8f8f8f" stroke-opacity="0.45" stroke-width="1"/>
<line x1="51" y1="102.5" x2="1751" y2="102.5" stroke="#de5050" stroke-opacity="0.41" stroke-width="1" stroke-dasharray="1 1"/>
<line x1="49" y1="102.5" x2="50" y2="102.5" stroke="#de5050" stroke-opacity="0.55" stroke-width="1"/>
<line x1="1751" y1="102.5" x2="1753" y2="102.5" stroke="#de5050" stroke-opacity="0.55" stroke-width="1"/>
<line x1="50" y1="94.5" x2="1751" y2="94.5" stroke="#8f8f8f" stroke-opacity="0.39" stroke-width="1" stroke-dasharray="1 1"/>
<line x1="49" y1="94.5" x2="50" y2="94.5" stroke="#8f8f8f" stroke-opacity="0.45" stroke-width="1"/>
<line x1="1751" y1="94.5" x2="1753" y2="94.5" stroke="#8f8f8f" stroke-opacity="0.45" stroke-width="1"/>
<line x1="51" y1="87.5" x2="1751" y2="87.5" stroke="#de5050" stroke-opacity="0.41" stroke-width="1" stroke-dasharray="1 1"/>
<line x1="49" y1="87.5" x2="50" y2="87.5" stroke="#de5050" stroke-opacity="0.55" stroke-width="1"/>
<line x1="1751" y1="87.5" x2="1753" y2="87.5" stroke="#de5050" stroke-opacity="0.55" stroke-width="1"/>
<line x1="50" y1="80.5" x2="1751" y2="80.5" stroke="#8f8f8f" stroke-opacity="0.39" stroke-width="1" stroke-dasharray="1 1"/>
<line x1="49" y1="80.5" x2="50" y2="80.5" stroke="#8f8f8f" stroke-opacity="0.45" stroke-width="1"/>
<line x1="1751" y1="80.5" x2="1753" y2="80.5" stroke="#8f8f8f" stroke-opacity="0.45" stroke-width="1"/>
<line x1="51" y1="73.5" x2="1751" y2="73.5" stroke="#de5050" stroke-opacity="0.41" stroke-width="1" stroke-dasharray="1 1"/>
<line x1="49" y1="73.5" x2="50" y2="73.5" stroke="#de5050" stroke-opacity="0.55" stroke-width="1"/>
<line x1="1751" y1="73.5" x2="1753" y2="73.5" stroke="#de5050" stroke-opacity="0.55" stroke-width="1"/>
<line x1="50" y1="66.5" x2="1751" y2="66.5" stroke="#8f8f8f" stroke-opacity="0.39" stroke-width="1" stroke-dasharray="1 1"/>
<line x1="49" y1="66.5" x2="50" y2="66.5" stroke="#8f8f8f" stroke-opacity="0.45" stroke-width="1"/>
<line x1="1751" y1="66.5" x2="1753" y2="66.5" stroke="#8f8f8f" stroke-opacity="0.45" stroke-width="1"/>
<line x1="51" y1="59.5" x2="1751" y2="59.5" stroke="#de5050" stroke-opacity="0.41" stroke-width="1" stroke-dasharray="1 1"/>
<line x1="49" y1="59.5" x2="50" y2="59.5" stroke="#de5050" stroke-opacity="0.55" stroke-width="1"/>
<line x1="1751" y1="59.5" x2="1753" y2="59.5" stroke="#de5050" stroke-opacity="0.55" stroke-width="1"/>
<line x1="50" y1="52.5" x2="1751" y2="52.5" stroke="#8f8f8f" stroke-opacity="0.39" stroke-width="1" stroke-dasharray="1 1"/>
<line x1="49" y1="52.5" x2="50" y2="52.5" stroke="#8f8f8f" stroke-opacity="0.45" stroke-width="1"/>
<line x1="1751" y1="52.5" x2="1753" y2="52.5" stroke="#8f8f8f" stroke-opacity="0.45" stroke-width="1"/>
<line x1="51" y1="45.5" x2="1751" y2="45.5" stroke="#de5050" stroke-opacity="0.41" stroke-width="1" stroke-dasharray="1 1"/>
<line x1="49" y1="45.5" x2="50" y2="45.5" stroke="#de5050" stroke-opacity="0.55" stroke-width="1"/>
<line x1="1751" y1="45.5" x2="1753" y2="45.5" stroke="#de5050" stroke-opacity="0.55" stroke-width="1"/>
<line x1="50" y1="38.5" x2="1751" y2="38.5" stroke="#8f8f8f" stroke-opacity="0.39" stroke-width="1" stroke-dasharray="1 1"/>
<line x1="49" y1="38.5" x2="50" y2="38.5" stroke="#8f8f8f" stroke-opacity="0.45" stroke-width="1"/>
<line x1="1751" y1="38.5" x2="1753" y2="38.5" stroke="#8f8f8f" stroke-opacity="0.45" stroke-width="1"/>
<line x1="82.5" y1="38" x2="82.5" y2="638" stroke="#de5050" stroke-opacity="0.41" stroke-width="1" stroke-dasharray="1 1"/>
<line x1="82.5" y1="36" x2="82.5" y2="38" stroke="#de5050" stroke-opacity="0.55" stroke-width="1"/>
<line x1="82.5" y1="639" x2="82.5" y2="641" stroke="#de5050" stroke-opacity="0.55" stroke-width="1"/>
<line x1="114.5" y1="38" x2="114.5" y2="638" stroke="#de5050" stroke-opacity="0.41" stroke-width="1" stroke-dasharray="1 1"/>
<line x1="114.5" y1="36" x2="114.5" y2="38" stroke="#de5050" stroke-opacity="0.55" stroke-width="1"/>
<line x1="114.5" y1="639" x2="114.5" y2="641" stroke="#de5050" stroke-opacity="0.55" stroke-width="1"/>
<line x1="147.5" y1="38" x2="147.5" y2="638" stroke="#de5050" stroke-opacity="0.41" stroke-width="1" stroke-dasharray="1 1"/>
<line x1="147.5" y1="36" x2="147.5" y2="38" stroke="#de5050" stroke-opacity="0.55" stroke-width="1"/>
<line x1="147.5" y1="639" x2="147.5" y2="641" stroke="#de5050" stroke-opacity="0.55" stroke-width="1"/>
<line x1="179.5" y1="38" x2="179.5" y2="638" stroke="#de5050" stroke-opacity="0.41" stroke-width="1" stroke-dasharray="1 1"/>
<line x1="179.5" y1="36" x2="179.5" y2="38" stroke="#de5050" stroke-opacity="0.55" stroke-width="1"/>
<line x1="179.5" y1="639" x2="179.5" y2="641" stroke="#de5050" stroke-opacity="0.55" stroke-width="1"/>
<line x1="212.5" y1="38" x2="212.5" y2="638" stroke="#de5050" stroke-opacity="0.41" stroke-width="1" stroke-dasharray="1 1"/>
<line x1="212.5" y1="36" x2="212.5" y2="38" stroke="#de5050" stroke-opacity="0.55" stroke-width="1"/>
<line x1="212.5" y1="639" x2="212.5" y2="641" stroke="#de5050" stroke-opacity="0.55" stroke-width="1"/>
<line x1="245.5" y1="38" x2="245.5" y2="638" stroke="#de5050" stroke-opacity="0.41" stroke-width="1" stroke-dasharray="1 1"/>
<line x1="245.5" y1="36" x2="245.5" y2="38" stroke="#de5050" stroke-opacity="0.55" stroke-width="1"/>
<line x1="245.5" y1="639" x2="245.5" y2="641" stroke="#de5050" stroke-opacity="0.55" stroke-width="1"/>
<line x1="277.5" y1="38" x2="277.5" y2="638" stroke="#de5050" stroke-opacity="0.41" stroke-width="1" stroke-dasharray="1 1"/>
<line x1="277.5" y1="36" x2="277.5" y2="38" stroke="#de5050" stroke-opacity="0.55" stroke-width="1"/>
<line x1="277.5" y1="639" x2="277.5" y2="641" stroke="#de5050" stroke-opacity="0.55" stroke-width="1"/>
<line x1="310.5" y1="38" x2="310.5" y2="638" stroke="#de5050" stroke-opacity="0.41" stroke-width="1" stroke-dasharray="1 1"/>
<line x1="310.5" y1="36" x2="310.5" y2="38" stroke="#de5050" stroke-opacity="0.55" stroke-width="1"/>
<line x1="310.5" y1="639" x2="310.5" y2="641" stroke="#de5050" stroke-opacity="0.55" stroke-width="1"/>
<line x1="342.5" y1="38" x2="342.5" y2="638" stroke="#de5050" stroke-opacity="0.41" stroke-width="1" stroke-dasharray="1 1"/>
<line x1="342.5" y1="36" x2="342.5" y2="38" stroke="#de5050" stroke-opacity="0.55" stroke-width="1"/>
<line x1="342.5" y1="639" x2="342.5" y2="641" stroke="#de5050" stroke-opacity="0.55" stroke-width="1"/>
<line x1="375.5" y1="38" x2="375.5" y2="638" stroke="#de5050" stroke-opacity="0.41" stroke-width="1" stroke-dasharray="1 1"/>
<line x1="375.5" y1="36" x2="375.5" y2="38" stroke="#de5050" stroke-opacity="0.55" stroke-width="1"/>
<line x1="375.5" y1="639" x2="375.5" y2="641" stroke="#de5050" stroke-opacity="0.55" stroke-width="1"/>
<line x1="408.5" y1="38" x2="408.5" y2="638" stroke="#de5050" stroke-opacity="0.41" stroke-width="1" stroke-dasharray="1 1"/>
<line x1="408.5" y1="36" x2="408.5" y2="38" stroke="#de5050" stroke-opacity="0.55" stroke-width="1"/>
<line x1="408.5" y1="639" x2="408.5" y2="641" stroke="#de5050" stroke-opacity="0.55" stroke-width="1"/>
<line x1="440.5" y1="38" x2="440.5" y2="638" stroke="#de5050" stroke-opacity="0.41" stroke-width="1" stroke-dasharray="1 1"/>
<line x1="440.5" y1="36" x2="440.5" y2="38" stroke="#de5050" stroke-opacity="0.55" stroke-width="1"/>
<line x1="440.5" y1="639" x2="440.5" y2="641" stroke="#de5050" stroke-opacity="0.55" stroke-width="1"/>
<line x1="473.5" y1="38" x2="473.5" y2="638" stroke="#de5050" stroke-opacity="0.41" stroke-width="1" stroke-dasharray="1 1"/>
<line x1="473.5" y1="36" x2="473.5" y2="38" stroke="#de5050" stroke-opacity="0.55" stroke-width="1"/>
<line x1="473.5" y1="639" x2="473.5" y2="641" stroke="#de5050" stroke-opacity="0.55" stroke-width="1"/>
<line x1="505.5" y1="38" x2="505.5" y2="638" stroke="#de5050" stroke-opacity="0.41" stroke-width="1" stroke-dasharray="1 1"/>
<line x1="505.5" y1="36" x2="505.5" y2="38" stroke="#de5050" stroke-opacity="0.55" stroke-width="1"/>
<line x1="505.5" y1="639" x2="505.5" y2="641" stroke="#de5050" stroke-opacity="0.55" stroke-width="1"/>
<line x1="538.5" y1="38" x2="538.5" y2="638" stroke="#de5050" stroke-opacity="0.41" stroke-width="1" stroke-dasharray="1 1"/>
<line x1="538.5" y1="36" x2="538.5" y2="38" stroke="#de5050" stroke-opacity="0.55" stroke-width="1"/>
<line x1="538.5" y1="639" x2="538.5" y2="641" stroke="#de5050" stroke-opacity="0.55" stroke-width="1"/>
<line x1="571.5" y1="38" x2="571.5" y2="638" stroke="#de5050" stroke-opacity="0.41" stroke-width="1" stroke-dasharray="1 1"/>
<line x1="571.5" y1="36" x2="571.5" y2="38" stroke="#de5050" stroke-opacity="0.55" stroke-width="1"/>
<line x1="571.5" y1="639" x2="571.5" y2="641" stroke="#de5050" stroke-opacity="0.55" stroke-width="1"/>
<line x1="603.5" y1="38" x2="603.5" y2="638" stroke="#de5050" stroke-opacity="0.41" stroke-width="1" stroke-dasharray="1 1"/>
<line x1="603.5" y1="36" x2="603.5" y2="38" stroke="#de5050" stroke-opacity="0.55" stroke-width="1"/>
<line x1="603.5" y1="639" x2="603.5" y2="641" stroke="#de5050" stroke-opacity="0.55" stroke-width="1"/>
<line x1="636.5" y1="38" x2="636.5" y2="638" stroke="#de5050" stroke-opacity="0.41" stroke-width="1" stroke-dasharray="1 1"/>
<line x1="636.5" y1="36" x2="636.5" y2="38" stroke="#de5050" stroke-opacity="0.55" stroke-width="1"/>
<line x1="636.5" y1="639" x2="636.5" y2="641" stroke="#de5050" stroke-opacity="0.55" stroke-width="1"/>
<line x1="668.5" y1="38" x2="668.5" y2="638" stroke="#de5050" stroke-opacity="0.41" stroke-width="1" stroke-dasharray="1 1"/>
<line x1="668.5" y1="36" x2="668.5" y2="38" stroke="#de5050" stroke-opacity="0.55" stroke-width="1"/>
<line x1="668.5" y1="639" x2="668.5" y2="641" stroke="#de5050" stroke-opacity="0.55" stroke-width="1"/>
<line x1="701.5" y1="38" x2="701.5" y2="638" stroke="#de5050" stroke-opacity="0.41" stroke-width="1" stroke-dasharray="1 1"/>
<line x1="701.5" y1="36" x2="701.5" y2="38" stroke="#de5050" stroke-opacity="0.55" stroke-width="1"/>
<line x1="701.5" y1="639" x2="701.5" y2="641" stroke="#de5050" stroke-opacity="0.55" stroke-width="1"/>
<line x1="734.5" y1="38" x2="734.5" y2="638" stroke="#de5050" stroke-opacity="0.41" stroke-width="1" stroke-dasharray="1 1"/>
<line x1="734.5" y1="36" x2="734.5" y2="38" stroke="#de5050" stroke-opacity="0.55" stroke-width="1"/>
<line x1="734.5" y1="639" x2="734.5" y2="641" stroke="#de5050" stroke-opacity="0.55" stroke-width="1"/>
<line x1="766.5" y1="38" x2="766.5" y2="638" stroke="#de5050" stroke-opacity="0.41" stroke-width="1" stroke-dasharray="1 1"/>
<line x1="766.5" y1="36" x2="766.5" y2="38" stroke="#de5050" stroke-opacity="0.55" stroke-width="1"/>
<line x1="766.5" y1="639" x2="766.5" y2="641" stroke="#de5050" stroke-opacity="0.55" stroke-width="1"/>
<line x1="799.5" y1="38" x2="799.5" y2="638" stroke="#de5050" stroke-opacity="0.41" stroke-width="1" stroke-dasharray="1 1"/>
<line x1="799.5" y1="36" x2="799.5" y2="38" stroke="#de5050" stroke-opacity="0.55" stroke-width="1"/>
<line x1="799.5" y1="639" x2="799.5" y2="641" stroke="#de5050" stroke-opacity="0.55" stroke-width="1"/>
<line x1="831.5" y1="38" x2="831.5" y2="638" stroke="#de5050" stroke-opacity="0.41" stroke-width="1" stroke-dasharray="1 1"/>
<line x1="831.5" y1="36" x2="831.5" y2="38" stroke="#de5050" stroke-opacity="0.55" stroke-width="1"/>
<line x1="831.5" y1="639" x2="831.5" y2="641" stroke="#de5050" stroke-opacity="0.55" stroke-width="1"/>
<line x1="864.5" y1="38" x2="864.5" y2="638" stroke="#de5050" stroke-opacity="0.41" stroke-width="1" stroke-dasharray="1 1"/>
<line x1="864.5" y1="36" x2="864.5" y2="38" stroke="#de5050" stroke-opacity="0.55" stroke-width="1"/>
<line x1="864.5" y1="639" x2="864.5" y2="641" stroke="#de5050" stroke-opacity="0.55" stroke-width="1"/>
<line x1="897.5" y1="38" x2="897.5" y2="638" stroke="#de5050" stroke-opacity="0.41" stroke-width="1" stroke-dasharray="1 1"/>
<line x1="897.5" y1="36" x2="897.5" y2="38" stroke="#de5050" stroke-opacity="0.55" stroke-width="1"/>
<line x1="897.5" y1="639" x2="897.5" y2="641" stroke="#de5050" stroke-opacity="0.55" stroke-width="1"/>
<line x1="929.5" y1="38" x2="929.5" y2="638" stroke="#de5050" stroke-opacity="0.41" stroke-width="1" stroke-dasharray="1 1"/>
<line x1="929.5" y1="36" x2="929.5" y2="38" stroke="#de5050" stroke-opacity="0.55" stroke-width="1"/>
<line x1="929.5" y1="639" x2="929.5" y2="641" stroke="#de5050" stroke-opacity="0.55" stroke-width="1"/>
<line x1="962.5" y1="38" x2="962.5" y2="638" stroke="#de5050" stroke-opacity="0.41" stroke-width="1" stroke-dasharray="1 1"/>
<line x1="962.5" y1="36" x2="962.5" y2="38" stroke="#de5050" stroke-opacity="0.55" stroke-width="1"/>
<line x1="962.5" y1="639" x2="962.5" y2="641" stroke="#de5050" stroke-opacity="0.55" stroke-width="1"/>
<line x1="994.5" y1="38" x2="994.5" y2="638" stroke="#de5050" stroke-opacity="0.41" stroke-width="1" stroke-dasharray="1 1"/>
<line x1="994.5" y1="36" x2="994.5" y2="38" stroke="#de5050" stroke-opacity="0.55" stroke-width="1"/>
<line x1="994.5" y1="639" x2="994.5" y2="641" stroke="#de5050" stroke-opacity="0.55" stroke-width="1"/>
<line x1="1027.5" y1="38" x2="1027.5" y2="638" stroke="#de5050" stroke-opacity="0.41" stroke-width="1" stroke-dasharray="1 1"/>
<line x1="1027.5" y1="36" x2="1027.5" y2="38" stroke="#de5050" stroke-opacity="0.55" stroke-width="1"/>
<line x1="1027.5" y1="639" x2="1027.5" y2="641" stroke="#de5050" stroke-opacity="0.55" stroke-width="1"/>
<line x1="1060.5" y1="38" x2="1060.5" y2="638" stroke="#de5050" stroke-opacity="0.41" stroke-width="1" stroke-dasharray="1 1"/>
<line x1="1060.5" y1="36" x2="1060.5" y2="38" stroke="#de5050" stroke-opacity="0.55" stroke-width="1"/>
<line x1="1060.5" y1="639" x2="1060.5" y2="641" stroke="#de5050" stroke-opacity="0.55" stroke-width="1"/>
<line x1="1092.5" y1="38" x2="1092.5" y2="638" stroke="#de5050" stroke-opacity="0.41" stroke-width="1" stroke-dasharray="1 1"/>
<line x1="1092.5" y1="36" x2="1092.5" y2="38" stroke="#de5050" stroke-opacity="0.55" stroke-width="1"/>
<line x1="1092.5" y1="639" x2="1092.5" y2="641" stroke="#de5050" stroke-opacity="0.55" stroke-width="1"/>
<line x1="1125.5" y1="38" x2="1125.5" y2="638" stroke="#de5050" stroke-opacity="0.41" stroke-width="1" stroke-dasharray="1 1"/>
<line x1="1125.5" y1="36" x2="1125.5" y2="38" stroke="#de5050" stroke-opacity="0.55" stroke-width="1"/>
<line x1="1125.5" y1="639" x2="1125.5" y2="641" stroke="#de5050" stroke-opacity="0.55" stroke-width="1"/>
<line x1="1157.5" y1="38" x2="1157.5" y2="638" stroke="#de5050" stroke-opacity="0.41" stroke-width="1" stroke-dasharray="1 1"/>
<line x1="1157.5" y1="36" x2="1157.5" y2="38" stroke="#de5050" stroke-opacity="0.55" stroke-width="1"/>
<line x1="1157.5" y1="639" x2="1157.5" y2="641" stroke="#de5050" stroke-opacity="0.55" stroke-width="1"/>
<line x1="1190.5" y1="38" x2="1190.5" y2="638" stroke="#de5050" stroke-opacity="0.41" stroke-width="1" stroke-dasharray="1 1"/>
<line x1="1190.5" y1="36" x2="1190.5" y2="38" stroke="#de5050" stroke-opacity="0.55" stroke-width="1"/>
<line x1="1190.5" y1="639" x2="1190.5" y2="641" stroke="#de5050" stroke-opacity="0.55" stroke-width="1"/>
<line x1="1223.5" y1="38" x2="1223.5" y2="638" stroke="#de5050" stroke-opacity="0.41" stroke-width="1" stroke-dasharray="1 1"/>
<line x1="1223.5" y1="36" x2="1223.5" y2="38" stroke="#de5050" stroke-opacity="0.55" stroke-width="1"/>
<line x1="1223.5" y1="639" x2="1223.5" y2="641" stroke="#de5050" stroke-opacity="0.55" stroke-width="1"/>
<line x1="1255.5" y1="38" x2="1255.5" y2="638" stroke="#de5050" stroke-opacity="0.41" stroke-width="1" stroke-dasharray="1 1"/>
<line x1="1255.5" y1="36" x2="1255.5" y2="38" stroke="#de5050" stroke-opacity="0.55" stroke-width="1"/>
<line x1="1255.5" y1="639" x2="1255.5" y2="641" stroke="#de5050" stroke-opacity="0.55" stroke-width="1"/>
<line x1="1288.5" y1="38" x2="1288.5" y2="638" stroke="#de5050" stroke-opacity="0.41" stroke-width="1" stroke-dasharray="1 1"/>
<line x1="1288.5" y1="36" x2="1288.5" y2="38" stroke="#de5050" stroke-opacity="0.55" stroke-width="1"/>
<line x1="1288.5" y1="639" x2="1288.5" y2="641" stroke="#de5050" stroke-opacity="0.55" stroke-width="1"/>
<line x1="1320.5" y1="38" x2="1320.5" y2="638" stroke="#de5050" stroke-opacity="0.41" stroke-width="1" stroke-dasharray="1 1"/>
<line x1="1320.5" y1="36" x2="1320.5" y2="38" stroke="#de5050" stroke-opacity="0.55" stroke-width="1"/>
<line x1="1320.5" y1="639" x2="1320.5" y2="641" stroke="#de5050" stroke-opacity="0.55" stroke-width="1"/>
<line x1="1353.5" y1="38" x2="1353.5" y2="638" stroke="#de5050" stroke-opacity="0.41" stroke-width="1" stroke-dasharray="1 1"/>
<line x1="1353.5" y1="36" x2="1353.5" y2="38" stroke="#de5050" stroke-opacity="0.55" stroke-width="1"/>
<line x1="1353.5" y1="639" x2="1353.5" y2="641" stroke="#de5050" stroke-opacity="0.55" stroke-width="1"/>
<line x1="1386.5" y1="38" x2="1386.5" y2="638" stroke="#de5050" stroke-opacity="0.41" stroke-width="1" stroke-dasharray="1 1"/>
<line x1="1386.5" y1="36" x2="1386.5" y2="38" stroke="#de5050" stroke-opacity="0.55" stroke-width="1"/>
<line x1="1386.5" y1="639" x2="1386.5" y2="641" stroke="#de5050" stroke-opacity="0.55" stroke-width="1"/>
<line x1="1418.5" y1="38" x2="1418.5" y2="638" stroke="#de5050" stroke-opacity="0.41" stroke-width="1" stroke-dasharray="1 1"/>
<line x1="1418.5" y1="36" x2="1418.5" y2="38" stroke="#de5050" stroke-opacity="0.55" stroke-width="1"/>
<line x1="1418.5" y1="639" x2="1418.5" y2="641" stroke="#de5050" stroke-opacity="0.55" stroke-width="1"/>
<line x1="1451.5" y1="38" x2="1451.5" y2="638" stroke="#de5050" stroke-opacity="0.41" stroke-width="1" stroke-dasharray="1 1"/>
<line x1="1451.5" y1="36" x2="1451.5" y2="38" stroke="#de5050" stroke-opacity="0.55" stroke-width="1"/>
<line x1="1451.5" y1="639" x2="1451.5" y2="641" stroke="#de5050" stroke-opacity="0.55" stroke-width="1"/>
<line x1="1483.5" y1="38" x2="1483.5" y2="638" stroke="#de5050" stroke-opacity="0.41" stroke-width="1" stroke-dasharray="1 1"/>
<line x1="1483.5" y1="36" x2="1483.5" y2="38" stroke="#de5050" stroke-opacity="0.55" stroke-width="1"/>
<line x1="1483.5" y1="639" x2="1483.5" y2="641" stroke="#de5050" stroke-opacity="0.55" stroke-width="1"/>
<line x1="1516.5" y1="38" x2="1516.5" y2="638" stroke="#de5050" stroke-opacity="0.41" stroke-width="1" stroke-dasharray="1 1"/>
<line x1="1516.5" y1="36" x2="1516.5" y2="38" stroke="#de5050" stroke-opacity="0.55" stroke-width="1"/>
<line x1="1516.5" y1="639" x2="1516.5" y2="641" stroke="#de5050" stroke-opacity="0.55" stroke-width="1"/>
<line x1="1549.5" y1="38" x2="1549.5" y2="638" stroke="#de5050" stroke-opacity="0.41" stroke-width="1" stroke-dasharray="1 1"/>
<line x1="1549.5" y1="36" x2="1549.5" y2="38" stroke="#de5050" stroke-opacity="0.55" stroke-width="1"/>
<line x1="1549.5" y1="639" x2="1549.5" y2="641" stroke="#de5050" stroke-opacity="0.55" stroke-width="1"/>
<line x1="1581.5" y1="38" x2="1581.5" y2="638" stroke="#de5050" stroke-opacity="0.41" stroke-width="1" stroke-dasharray="1 1"/>
<line x1="1581.5" y1="36" x2="1581.5" y2="38" stroke="#de5050" stroke-opacity="0.55" stroke-width="1"/>
<line x1="1581.5" y1="639" x2="1581.5" y2="641" stroke="#de5050" stroke-opacity="0.55" stroke-width="1"/>
<line x1="1614.5" y1="38" x2="1614.5" y2="638" stroke="#de5050" stroke-opacity="0.41" stroke-width="1" stroke-dasharray="1 1"/>
<line x1="1614.5" y1="36" x2="1614.5" y2="38" stroke="#de5050" stroke-opacity="0.55" stroke-width="1"/>
<line x1="1614.5" y1="639" x2="1614.5" y2="641" stroke="#de5050" stroke-opacity="0.55" stroke-width="1"/>
<line x1="1646.5" y1="38" x2="1646.5" y2="638" stroke="#de5050" stroke-opacity="0.41" stroke-width="1" stroke-dasharray="1 1"/>
<line x1="1646.5" y1="36" x2="1646.5" y2="38" stroke="#de5050" stroke-opacity="0.55" stroke-width="1"/>
<line x1="1646.5" y1="639" x2="1646.5" y2="641" stroke="#de5050" stroke-opacity="0.55" stroke-width="1"/>
<line x1="1679.5" y1="38" x2="1679.5" y2="638" stroke="#de5050" stroke-opacity="0.41" stroke-width="1" stroke-dasharray="1 1"/>
<line x1="1679.5" y1="36" x2="1679.5" y2="38" stroke="#de5050" stroke-opacity="0.55" stroke-width="1"/>
<line x1="1679.5" y1="639" x2="1679.5" y2="641" stroke="#de5050" stroke-opacity="0.55" stroke-width="1"/>
<line x1="1712.5" y1="38" x2="1712.5" y2="638" stroke="#de5050" stroke-opacity="0.41" stroke-width="1" stroke-dasharray="1 1"/>
<line x1="1712.5" y1="36" x2="1712.5" y2="38" stroke="#de5050" stroke-opacity="0.55" stroke-width="1"/>
<line x1="1712.5" y1="639" x2="1712.5" y2="641" stroke="#de5050" stroke-opacity="0.55" stroke-width="1"/>
<line x1="1744.5" y1="38" x2="1744.5" y2="638" stroke="#de5050" stroke-opacity="0.41" stroke-width="1" stroke-dasharray="1 1"/>
<line x1="1744.5" y1="36" x2="1744.5" y2="38" stroke="#de5050" stroke-opacity="0.55" stroke-width="1"/>
<line x1="1744.5" y1="639" x2="1744.5" y2="641" stroke="#de5050" stroke-opacity="0.55" stroke-width="1"/>
<rect x="50" y="34" width="1" height="607" fill="#1f1f1f" fill-opacity="0.62"/>
<rect x="47" y="638" width="1708" height="1" fill="#1f1f1f" fill-opacity="0.8"/>
<polygon points="48,36 54,36 51,31.4" fill="#7f1f1f"/>
<polygon points="1753,635.1 1753,641.1 1757.6,638.1" fill="#7f1f1f"/>
<text class="ax" x="44" y="641.6" text-anchor="end">40</text>
<text class="ax" x="44" y="627.5" text-anchor="end">42</text>
<text class="ax" x="44" y="613.4" text-anchor="end">44</text>
<text class="ax" x="44" y="599.2" text-anchor="end">46</text>
<text class="ax" x="44" y="585.1" text-anchor="end">48</text>
<text class="ax" x="44" y="571.0" text-anchor="end">50</text>
<text class="ax" x="44" y="556.9" text-anchor="end">52</text>
<text class="ax" x="44" y="542.8" text-anchor="end">54</text>
<text class="ax" x="44" y="528.7" text-anchor="end">56</text>
<text class="ax" x="44" y="514.5" text-anchor="end">58</text>
<text class="ax" x="44" y="500.4" text-anchor="end">60</text>
<text class="ax" x="44" y="486.3" text-anchor="end">62</text>
<text class="ax" x="44" y="472.2" text-anchor="end">64</text>
<text class="ax" x="44" y="458.1" text-anchor="end">66</text>
<text class="ax" x="44" y="444.0" text-anchor="end">68</text>
<text class="ax" x="44" y="429.8" text-anchor="end">70</text>
<text class="ax" x="44" y="415.7" text-anchor="end">72</text>
<text class="ax" x="44" y="401.6" text-anchor="end">74</text>
<text class="ax" x="44" y="387.5" text-anchor="end">76</text>
<text class="ax" x="44" y="373.4" text-anchor="end">78</text>
<text class="ax" x="44" y="359.2" text-anchor="end">80</text>
<text class="ax" x="44" y="345.1" text-anchor="end">82</text>
<text class="ax" x="44" y="331.0" text-anchor="end">84</text>
<text class="ax" x="44" y="316.9" text-anchor="end">86</text>
<text class="ax" x="44" y="302.8" text-anchor="end">88</text>
<text class="ax" x="44" y="288.7" text-anchor="end">90</text>
<text class="ax" x="44" y="274.5" text-anchor="end">92</text>
<text class="ax" x="44" y="260.4" text-anchor="end">94</text>
<text class="ax" x="44" y="246.3" text-anchor="end">96</text>
<text class="ax" x="44" y="232.2" text-anchor="end">98</text>
<text class="ax" x="44" y="218.1" text-anchor="end">100</text>
<text class="ax" x="44" y="204.0" text-anchor="end">102</text>
<text class="ax" x="44" y="189.8" text-anchor="end">104</text>
<text class="ax" x="44" y="175.7" text-anchor="end">106</text>
<text class="ax" x="44" y="161.6" text-anchor="end">108</text>
<text class="ax" x="44" y="147.5" text-anchor="end">110</text>
<text class="ax" x="44" y="133.4" text-anchor="end">112</text>
<text class="ax" x="44" y="119.2" text-anchor="end">114</text>
<text class="ax" x="44" y="105.1" text-anchor="end">116</text>
<text class="ax" x="44" y="91.0" text-anchor="end">118</text>
<text class="ax" x="44" y="76.9" text-anchor="end">120</text>
<text class="ax" x="44" y="62.8" text-anchor="end">122</text>
<text class="ax" x="44" y="48.7" text-anchor="end">124</text>
<text class="ax" x="83.2" y="651" text-anchor="middle">02/13</text>
<text class="ax" x="115.8" y="651" text-anchor="middle">02/20</text>
<text class="ax" x="148.4" y="651" text-anchor="middle">02/27</text>
<text class="ax" x="181.0" y="651" text-anchor="middle">03/06</text>
<text class="ax" x="213.6" y="651" text-anchor="middle">03/13</text>
<text class="ax" x="246.2" y="651" text-anchor="middle">03/20</text>
<text class="ax" x="278.7" y="651" text-anchor="middle">03/27</text>
<text class="ax" x="311.3" y="651" text-anchor="middle">04/03</text>
<text class="ax" x="343.9" y="651" text-anchor="middle">04/10</text>
<text class="ax" x="376.5" y="651" text-anchor="middle">04/17</text>
<text class="ax" x="409.1" y="651" text-anchor="middle">04/24</text>
<text class="ax" x="441.7" y="651" text-anchor="middle">05/01</text>
<text class="ax" x="474.3" y="651" text-anchor="middle">05/08</text>
<text class="ax" x="506.9" y="651" text-anchor="middle">05/15</text>
<text class="ax" x="539.5" y="651" text-anchor="middle">05/22</text>
<text class="ax" x="572.1" y="651" text-anchor="middle">05/29</text>
<text class="ax" x="604.6" y="651" text-anchor="middle">06/05</text>
<text class="ax" x="637.2" y="651" text-anchor="middle">06/12</text>
<text class="ax" x="669.8" y="651" text-anchor="middle">06/19</text>
<text class="ax" x="702.4" y="651" text-anchor="middle">06/26</text>
<text class="ax" x="735.0" y="651" text-anchor="middle">07/03</text>
<text class="ax" x="767.6" y="651" text-anchor="middle">07/10</text>
<text class="ax" x="800.2" y="651" text-anchor="middle">07/17</text>
<text class="ax" x="832.8" y="651" text-anchor="middle">07/24</text>
<text class="ax" x="865.4" y="651" text-anchor="middle">07/31</text>
<text class="ax" x="898.0" y="651" text-anchor="middle">08/07</text>
<text class="ax" x="930.5" y="651" text-anchor="middle">08/14</text>
<text class="ax" x="963.1" y="651" text-anchor="middle">08/21</text>
<text class="ax" x="995.7" y="651" text-anchor="middle">08/28</text>
<text class="ax" x="1028.3" y="651" text-anchor="middle">09/04</text>
<text class="ax" x="1060.9" y="651" text-anchor="middle">09/11</text>
<text class="ax" x="1093.5" y="651" text-anchor="middle">09/18</text>
<text class="ax" x="1126.1" y="651" text-anchor="middle">09/25</text>
<text class="ax" x="1158.7" y="651" text-anchor="middle">10/02</text>
<text class="ax" x="1191.3" y="651" text-anchor="middle">10/09</text>
<text class="ax" x="1223.9" y="651" text-anchor="middle">10/16</text>
<text class="ax" x="1256.4" y="651" text-anchor="middle">10/23</text>
<text class="ax" x="1289.0" y="651" text-anchor="middle">10/30</text>
<text class="ax" x="1321.6" y="651" text-anchor="middle">11/06</text>
<text class="ax" x="1354.2" y="651" text-anchor="middle">11/13</text>
<text class="ax" x="1386.8" y="651" text-anchor="middle">11/20</text>
<text class="ax" x="1419.4" y="651" text-anchor="middle">11/27</text>
<text class="ax" x="1452.0" y="651" text-anchor="middle">12/04</text>
<text class="ax" x="1484.6" y="651" text-anchor="middle">12/11</text>
<text class="ax" x="1517.2" y="651" text-anchor="middle">12/18</text>
<text class="ax" x="1549.8" y="651" text-anchor="middle">12/25</text>
<text class="ax" x="1582.3" y="651" text-anchor="middle">01/01</text>
<text class="ax" x="1614.9" y="651" text-anchor="middle">01/08</text>
<text class="ax" x="1647.5" y="651" text-anchor="middle">01/15</text>
<text class="ax" x="1680.1" y="651" text-anchor="middle">01/22</text>
<text class="ax" x="1712.7" y="651" text-anchor="middle">01/29</text>
<text class="ax" x="1745.3" y="651" text-anchor="middle">02/05</text>
<text class="tt" transform="translate(890.3,28.4) scale(0.957,1)" x="0" y="0" text-anchor="middle">Attic - Year</text>
<text class="wm" transform="translate(1769.2,5) rotate(90)">RRDTOOL / TOBI OETIKER</text>
<rect x="19.5" y="662.5" width="10" height="9" fill="#0078ff" stroke="#000" stroke-width="1"/>
<rect x="19.5" y="680.5" width="10" height="9" fill="#00ff00" stroke="#000" stroke-width="1"/>
<rect x="250.5" y="662.5" width="10" height="9" fill="#ff9900" stroke="#000" stroke-width="1"/>
<rect x="255.5" y="680.5" width="10" height="9" fill="#ff0000" stroke="#000" stroke-width="1"/>
<text class="lg" transform="translate(32.3,671) scale(0.947,1)" x="0" y="0" text-anchor="start">Actual</text>
<text class="lg" transform="translate(98.6,671) scale(0.966,1)" x="0" y="0" text-anchor="start">77.48</text>
<text class="lg" transform="translate(155,671) scale(0.966,1)" x="0" y="0" text-anchor="start">02/06 01:36</text>
<text class="lg" transform="translate(263,671) scale(0.947,1)" x="0" y="0" text-anchor="start">Average</text>
<text class="lg" transform="translate(340,671) scale(0.966,1)" x="0" y="0" text-anchor="start">74.46</text>
<text class="lg" transform="translate(32.3,689) scale(0.947,1)" x="0" y="0" text-anchor="start">Low</text>
<text class="lg" transform="translate(104,689) scale(0.966,1)" x="0" y="0" text-anchor="start">49.67</text>
<text class="lg" transform="translate(160,689) scale(0.966,1)" x="0" y="0" text-anchor="start">03/08 11:12</text>
<text class="lg" transform="translate(268,689) scale(0.947,1)" x="0" y="0" text-anchor="start">High</text>
<text class="lg" transform="translate(336,689) scale(0.966,1)" x="0" y="0" text-anchor="start">103.29</text>
<text class="lg" transform="translate(400,689) scale(0.966,1)" x="0" y="0" text-anchor="start">06/15 21:48</text>
</svg></body></html>
